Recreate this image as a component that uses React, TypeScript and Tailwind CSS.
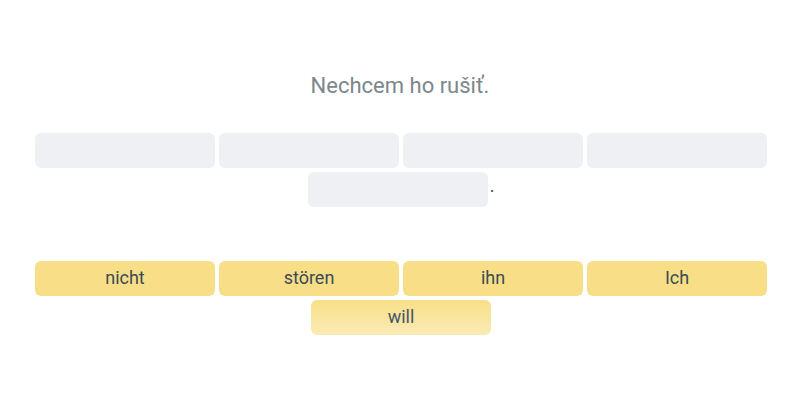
export default function App() {
  const slotsRow = [0, 1, 2, 3];
  const words = ["nicht", "stören", "ihn", "Ich"];
  return (
    <div className="w-[800px] h-[400px] bg-white" style={{ fontFamily: "Roboto, sans-serif" }}>
      <div className="pt-[72px] text-center text-[22px] leading-[28px] text-[#7b878a]">Nechcem ho rušiť.</div>
      <div className="ml-[33px] w-[736px] mt-[31px] flex flex-wrap justify-center items-center">
        {slotsRow.map((i) => (
          <div key={i} className="m-[2px] w-[180px] h-[35px] rounded-md bg-[#eff0f4]" />
        ))}
        <div className="m-[2px] w-[180px] h-[35px] rounded-md bg-[#eff0f4]" />
        <span className="text-[18px] text-[#3c4a55] leading-none mb-[8px] mr-[2px]">.</span>
      </div>
      <div className="ml-[33px] w-[736px] mt-[50px] flex flex-wrap justify-center">
        {words.map((w) => (
          <div
            key={w}
            className="m-[2px] w-[180px] h-[35px] pb-[2px] rounded-md bg-[#f8df87] flex items-center justify-center text-[18px] text-[#3c4a55]"
          >
            {w}
          </div>
        ))}
        <div className="m-[2px] w-[180px] h-[35px] pb-[2px] rounded-md bg-gradient-to-b from-[#f8df87] to-[#faebb5] flex items-center justify-center text-[18px] text-[#465468]">
          will
        </div>
      </div>
    </div>
  );
}
